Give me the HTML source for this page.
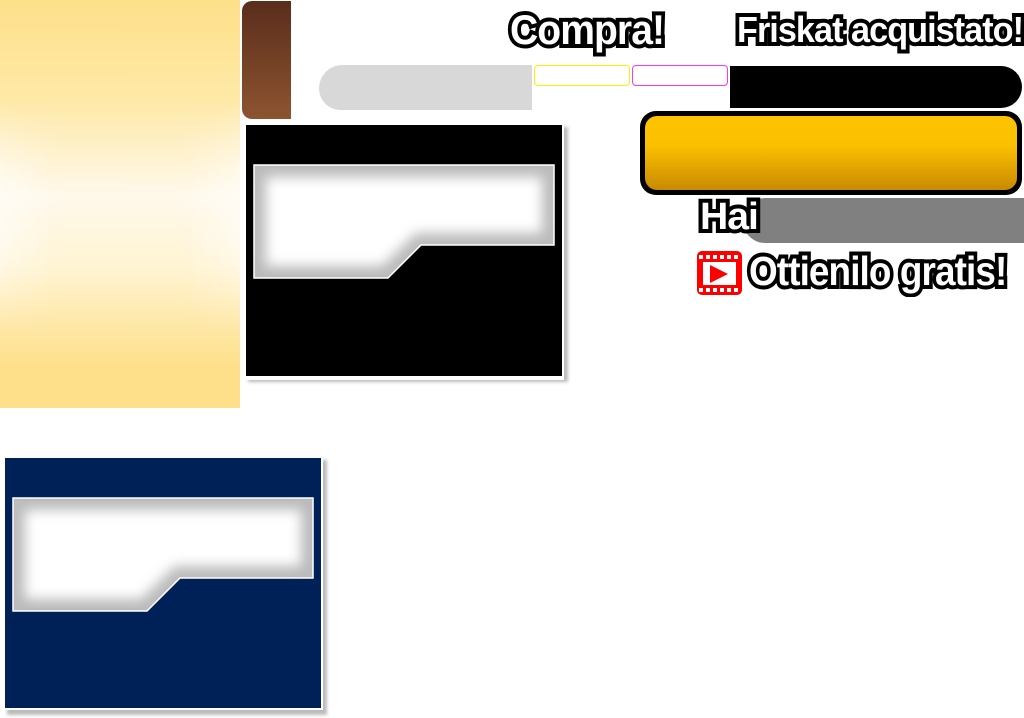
<!DOCTYPE html>
<html><head><meta charset="utf-8"><style>
html,body{margin:0;padding:0;width:1024px;height:718px;background:#fff;overflow:hidden;position:relative;font-family:"Liberation Sans",sans-serif}
div{position:absolute;box-sizing:border-box}
.t{font-weight:bold;color:#fff;-webkit-text-stroke:8px #000;paint-order:stroke fill;white-space:nowrap;transform-origin:0 0;letter-spacing:-1px}
</style></head><body>
<div style="left:0;top:0;width:240px;height:408px;background:linear-gradient(180deg,#fee08a 0%,#fee9a8 25%,#fff9ec 48%,#fff4d4 65%,#fee08a 90%,#fee08a 100%)"></div>
<div style="left:0;top:100px;width:240px;height:230px;background:linear-gradient(90deg,rgba(255,255,255,0.5) 0%,rgba(255,255,255,0) 25%,rgba(255,255,255,0) 75%,rgba(255,255,255,0.5) 100%);-webkit-mask-image:linear-gradient(180deg,transparent,#000 40%,#000 60%,transparent)"></div>
<div style="left:242px;top:1px;width:49px;height:118px;border-radius:10px 0 0 10px;background:linear-gradient(180deg,#5a2d1c,#8d5430)"></div>

<div style="left:319px;top:65px;width:213px;height:45px;background:#d8d8d8;border-radius:24px 0 0 22px"></div>
<div style="left:534px;top:65px;width:96px;height:21px;border:1px solid #ffef00;border-radius:4px"></div>
<div style="left:632px;top:65px;width:96px;height:21px;border:1px solid #ff33ff;border-radius:4px"></div>
<div style="left:730px;top:66px;width:292px;height:42px;background:#000;border-radius:0 22px 22px 0"></div>

<div class="t" style="left:510px;top:6px;font-size:42px;transform:scaleX(0.93)">Compra!</div>
<div class="t" style="left:737px;top:9px;font-size:36px;transform:scaleX(0.95)">Friskat acquistato!</div>

<div style="left:640px;top:111px;width:382px;height:84px;background:#000;border-radius:16px"></div>
<div style="left:645px;top:116px;width:372px;height:74px;border-radius:12px;background:linear-gradient(180deg,#fec300 0%,#fbc000 40%,#c88a00 100%)"></div>

<div style="left:743px;top:198px;width:281px;height:45px;background:#808080;border-radius:22px 0 0 22px"></div>
<div class="t" style="left:700px;top:196px;font-size:38px;transform:scaleX(1.03)">Hai</div>

<div style="left:697px;top:251px;width:45px;height:44px;background:#f00;border-radius:5px"></div>
<div style="left:703px;top:262px;width:33px;height:23px;background:#fff"></div>
<div style="left:699px;top:255px;width:41px;height:4px;background:repeating-linear-gradient(90deg,#fff 0 4px,transparent 4px 7px)"></div>
<div style="left:699px;top:288px;width:41px;height:4px;background:repeating-linear-gradient(90deg,#fff 0 4px,transparent 4px 7px)"></div>
<svg style="position:absolute;left:708px;top:263px" width="22" height="22"><polygon points="2,2 20,11 2,20" fill="#f00"/></svg>
<div class="t" style="left:749px;top:248px;font-size:41px;transform:scaleX(0.9)">Ottienilo gratis!</div>

<svg style="position:absolute;left:244px;top:123px" width="330" height="265">
<defs><filter id="b"><feGaussianBlur stdDeviation="6"/></filter><filter id="s"><feGaussianBlur stdDeviation="1.5"/></filter></defs>
<rect x="4" y="4" width="320" height="255" fill="#bbb" filter="url(#s)"/>
<rect x="0" y="0" width="320" height="257" fill="#fff"/>
<rect x="2" y="2" width="316" height="251" fill="#000"/>
<polygon points="10,42 310,42 310,122 177,122 144,155 10,155" fill="#bbb" stroke="#fff" stroke-width="1.5"/>
<polygon points="22,54 298,54 298,110 172,110 138,143 22,143" fill="#fff" filter="url(#b)"/>
</svg>

<svg style="position:absolute;left:3px;top:456px" width="330" height="262">
<rect x="4" y="4" width="320" height="255" fill="#bbb" filter="url(#s)"/>
<rect x="0" y="0" width="320" height="254" fill="#fff"/>
<rect x="2" y="2" width="316" height="250" fill="#002157"/>
<polygon points="10,42 310,42 310,122 177,122 144,155 10,155" fill="#bbb" stroke="#fff" stroke-width="1.5"/>
<polygon points="22,54 298,54 298,110 172,110 138,143 22,143" fill="#fff" filter="url(#b)"/>
</svg>
</body></html>
